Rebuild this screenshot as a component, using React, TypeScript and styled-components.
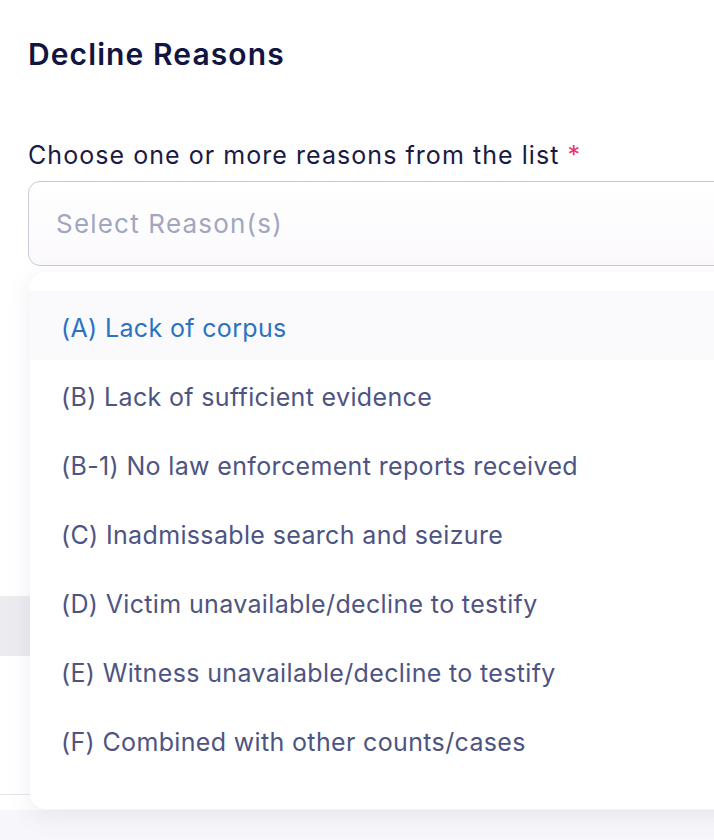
import styled, { createGlobalStyle } from "styled-components";

const reasons = [
  "(A) Lack of corpus",
  "(B) Lack of sufficient evidence",
  "(B-1) No law enforcement reports received",
  "(C) Inadmissable search and seizure",
  "(D) Victim unavailable/decline to testify",
  "(E) Witness unavailable/decline to testify",
  "(F) Combined with other counts/cases",
];

function App() {
  return (
    <>
      <GlobalStyle />
      <Page>
        <Title>Decline Reasons</Title>

        <Field>
          <Label>
            Choose one or more reasons from the list <Required>*</Required>
          </Label>

          <SelectWrap>
            <SelectBox>
              <Placeholder>Select Reason(s)</Placeholder>
            </SelectBox>

            <Menu>
              {reasons.map((r, i) => (
                <Option key={r} $active={i === 0}>
                  {r}
                </Option>
              ))}
            </Menu>
          </SelectWrap>
        </Field>

        {/* page content sitting under the open menu */}
        <Behind>
          <TableHead />
          <Divider />
        </Behind>
        <Footer />
      </Page>
    </>
  );
}

export default App;

const GlobalStyle = createGlobalStyle`
  html, body {
    margin: 0;
    padding: 0;
    background: #ffffff;
    overflow: hidden;
  }
  body {
    font-family: Inter, "Noto Sans", "Liberation Sans", sans-serif;
    -webkit-font-smoothing: antialiased;
  }
`;

const Page = styled.div`
  width: 714px;
  height: 840px;
  overflow: hidden;
  background: #ffffff;
  display: flex;
  flex-direction: column;
`;

const Title = styled.h1`
  margin: 0;
  padding: 36px 0 0 28px;
  height: 36px;
  font-size: 30px;
  line-height: 36px;
  font-weight: 600;
  color: #12153f;
  letter-spacing: 1.1px;
`;

const Field = styled.div`
  display: flex;
  flex-direction: column;
  padding: 0 0 0 28px;
  margin-top: 68px;
  position: relative;
  z-index: 2;
`;

const Label = styled.div`
  font-size: 25px;
  line-height: 30px;
  color: #191b45;
  font-weight: 400;
  letter-spacing: 1.05px;
  margin-bottom: 11px;
`;

const Required = styled.span`
  color: #f0336c;
`;

const SelectWrap = styled.div`
  position: relative;
  width: 720px;
`;

const SelectBox = styled.div`
  height: 85px;
  box-sizing: border-box;
  border: 1.5px solid #c9cade;
  border-radius: 12px;
  background: linear-gradient(#ffffff, #fbf9fc);
  display: flex;
  align-items: center;
  padding-left: 27px;
`;

const Placeholder = styled.span`
  font-size: 26px;
  color: #a2a6bf;
  letter-spacing: 1.2px;
`;

const Menu = styled.div`
  position: absolute;
  top: calc(100% + 6px);
  left: 2px;
  width: 720px;
  box-sizing: border-box;
  background: #ffffff;
  border-radius: 16px;
  box-shadow: 0 6px 24px rgba(120, 110, 160, 0.12);
  padding: 19px 0 35px;
  display: flex;
  flex-direction: column;
`;

const Option = styled.div<{ $active?: boolean }>`
  height: 69px;
  box-sizing: border-box;
  display: flex;
  align-items: center;
  padding: 4px 0 0 31px;
  font-size: 25px;
  letter-spacing: 0.35px;
  color: ${(p) => (p.$active ? "#2c72c2" : "#4e5482")};
  background: ${(p) => (p.$active ? "#fafafc" : "transparent")};
`;

const Behind = styled.div`
  flex: 1;
  display: flex;
  flex-direction: column;
  position: relative;
  z-index: 1;
`;

const TableHead = styled.div`
  margin-top: 330px;
  height: 60px;
  width: 30px;
  background: #ececf0;
`;

const Divider = styled.div`
  margin-top: 138px;
  height: 1px;
  width: 30px;
  background: #e3e3e8;
`;

const Footer = styled.div`
  height: 30px;
  background: #f7f6fa;
`;
